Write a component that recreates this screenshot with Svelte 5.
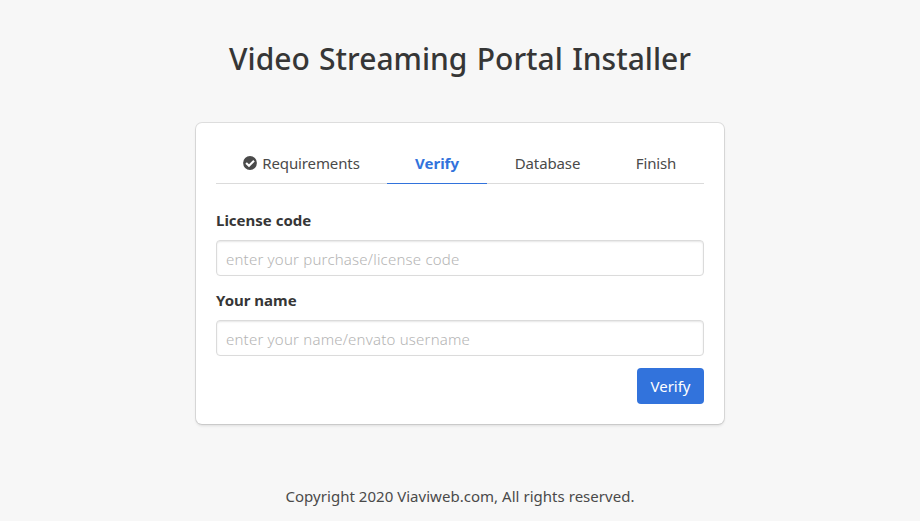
<script>
  const tabs = [
    { label: 'Requirements', done: true, width: 171 },
    { label: 'Verify', active: true, width: 100 },
    { label: 'Database', width: 121 },
    { label: 'Finish', width: 96 }
  ];
  const fields = [
    { id: 'license', label: 'License code', placeholder: 'enter your purchase/license code' },
    { id: 'client', label: 'Your name', placeholder: 'enter your name/envato username' }
  ];
</script>

<main>
  <h1>Video Streaming Portal Installer</h1>
  <section class="box">
    <nav>
      {#each tabs as tab}
        <div class="tab" class:active={tab.active} style="flex: {tab.width} 0 0">
          {#if tab.done}
            <svg viewBox="0 0 14 14" width="14" height="14" aria-hidden="true">
              <circle cx="7" cy="7" r="6.9" fill="#4a4a4a" />
              <path d="M3.1 6.9 6 9.8 11 4.8" fill="none" stroke="#fff" stroke-width="2.1" />
            </svg>
          {/if}
          <span>{tab.label}</span>
        </div>
      {/each}
    </nav>
    <form onsubmit={(e) => e.preventDefault()}>
      {#each fields as field}
        <div class="field">
          <label for={field.id}>{field.label}</label>
          <input id={field.id} type="text" placeholder={field.placeholder} />
        </div>
      {/each}
      <div class="actions"><button type="submit">Verify</button></div>
    </form>
  </section>
  <footer>Copyright 2020 Viaviweb.com, All rights reserved.</footer>
</main>

<style>
  :global(body) {
    margin: 0;
    background: #f7f7f7;
  }
  main {
    box-sizing: border-box;
    height: 521px;
    padding-top: 41px;
    overflow: hidden;
    display: flex;
    flex-direction: column;
    align-items: center;
    font: 400 15px/24px 'Noto Sans', 'Open Sans', sans-serif;
    color: #4a4a4a;
  }
  h1 {
    margin: 0 0 46px;
    font-size: 30px;
    line-height: 36px;
    font-weight: 500;
    word-spacing: 1.5px;
    color: #363636;
    white-space: nowrap;
  }
  .box {
    box-sizing: border-box;
    width: 528px;
    height: 301px;
    padding: 20px;
    background: #fff;
    border-radius: 6px;
    box-shadow: 0 2px 3px rgba(10, 10, 10, 0.1), 0 0 0 1px rgba(10, 10, 10, 0.1);
  }
  nav {
    display: flex;
    height: 41px;
    margin-bottom: 24px;
  }
  .tab {
    box-sizing: border-box;
    display: flex;
    align-items: center;
    justify-content: center;
    gap: 5px;
    border-bottom: 1px solid #dbdbdb;
    letter-spacing: -0.12px;
    white-space: nowrap;
  }
  .active {
    color: #3273dc;
    font-weight: 700;
    letter-spacing: 0;
    border-color: #3273dc;
  }
  .field {
    margin-bottom: 12px;
  }
  label {
    display: block;
    margin-bottom: 8px;
    font-weight: 700;
    color: #363636;
  }
  input {
    box-sizing: border-box;
    display: block;
    width: 100%;
    height: 36px;
    margin: 0;
    padding: 2px 9px 0;
    border: 1px solid #dbdbdb;
    border-radius: 4px;
    background: #fff;
    box-shadow: inset 0 1px 2px rgba(10, 10, 10, 0.1);
    font: inherit;
    color: #363636;
  }
  input::placeholder {
    font-weight: 300;
    letter-spacing: 0.2px;
    color: #b4b4b4;
    opacity: 1;
  }
  .actions {
    display: flex;
    justify-content: flex-end;
  }
  button {
    width: 67px;
    height: 36px;
    padding: 0;
    border: 0;
    border-radius: 4px;
    background: #3273dc;
    color: #fff;
    font: inherit;
  }
  footer {
    margin-top: 60px;
    letter-spacing: 0.03px;
    white-space: nowrap;
  }
</style>
